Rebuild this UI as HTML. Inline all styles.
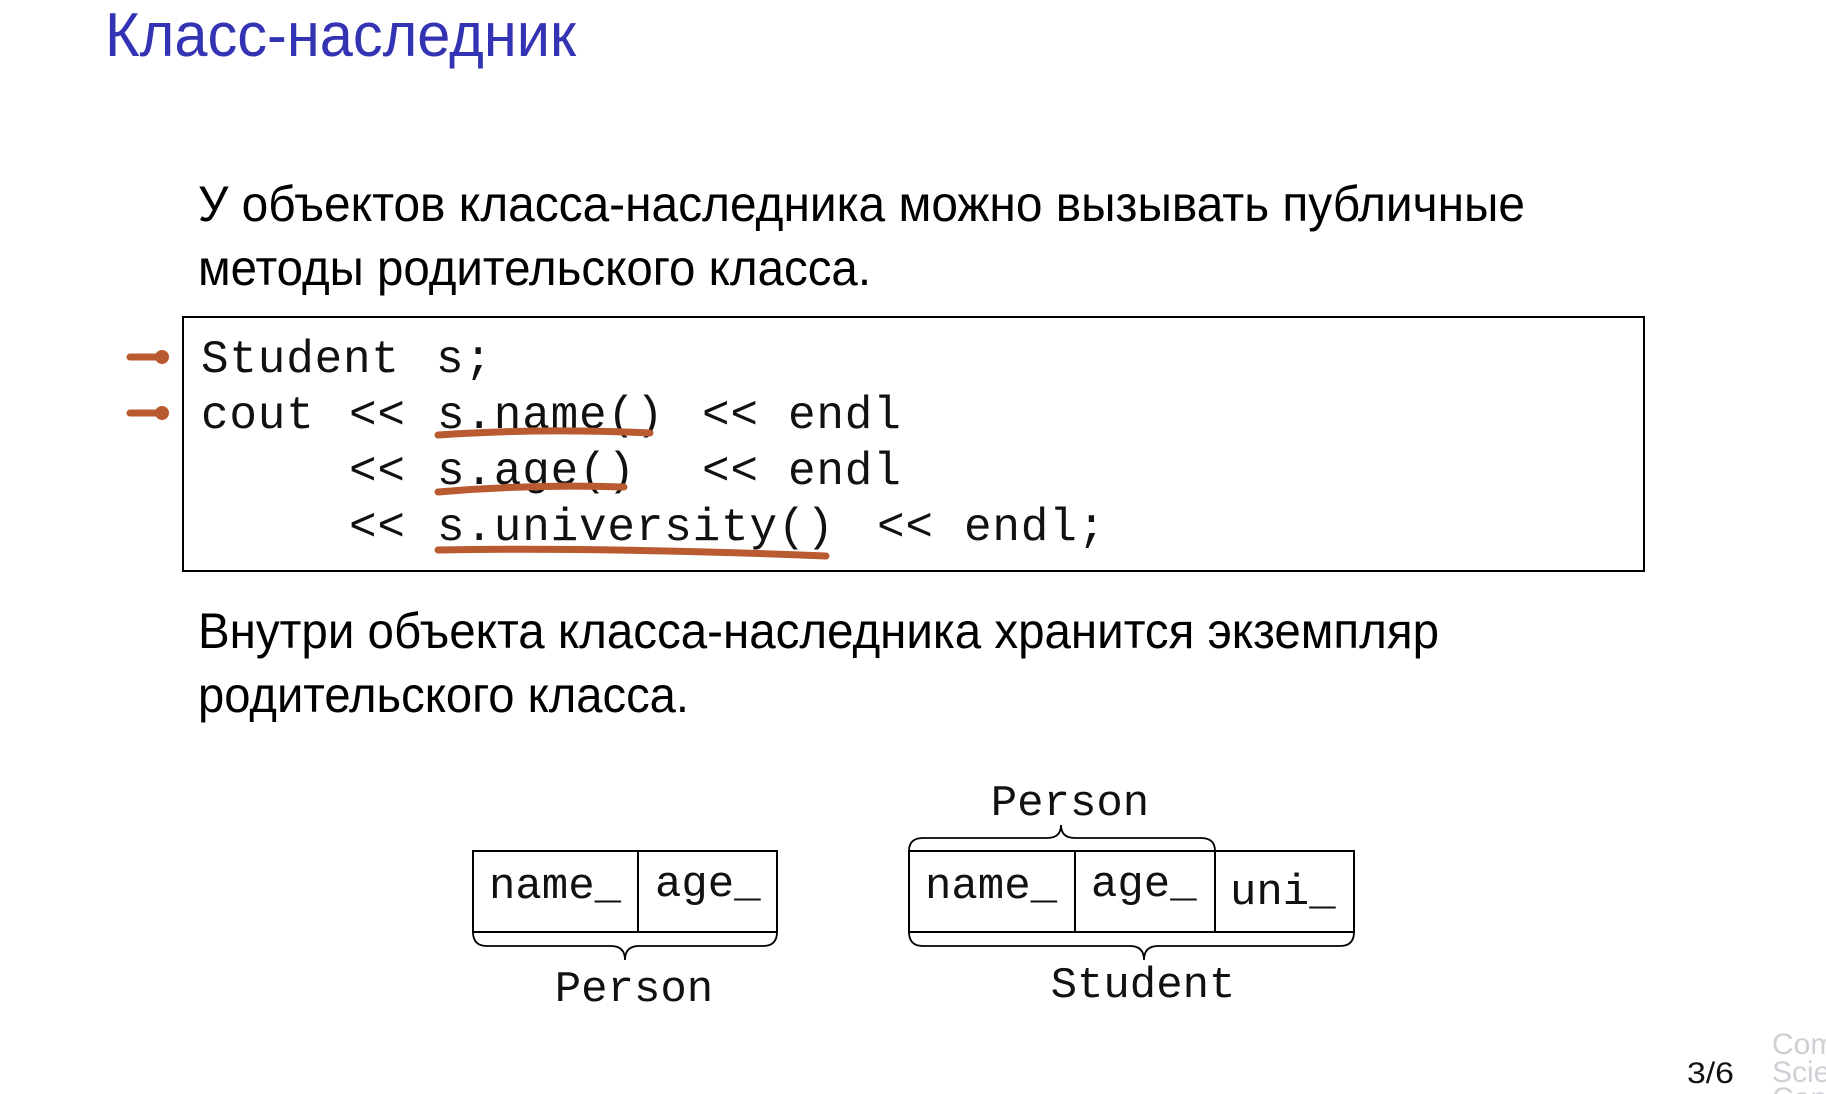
<!DOCTYPE html>
<html><head><meta charset="utf-8"><style>html,body{margin:0;padding:0;background:#fff;width:1826px;height:1094px;overflow:hidden}</style></head>
<body>
<svg width="1826" height="1094" viewBox="0 0 1826 1094" xmlns="http://www.w3.org/2000/svg">
<rect width="1826" height="1094" fill="#fff"/>
<g font-family="'Liberation Sans', sans-serif">
<text x="105" y="56" font-size="62" fill="#3333b3" textLength="471" lengthAdjust="spacingAndGlyphs">Класс-наследник</text>
<text x="198" y="221" font-size="50" fill="#000" textLength="1327" lengthAdjust="spacingAndGlyphs">У объектов класса-наследника можно вызывать публичные</text>
<text x="198" y="285" font-size="50" fill="#000" textLength="673" lengthAdjust="spacingAndGlyphs">методы родительского класса.</text>
<text x="198" y="648" font-size="50" fill="#000" textLength="1241" lengthAdjust="spacingAndGlyphs">Внутри объекта класса-наследника хранится экземпляр</text>
<text x="198" y="712" font-size="50" fill="#000" textLength="491" lengthAdjust="spacingAndGlyphs">родительского класса.</text>
</g>
<rect x="183" y="317" width="1461" height="254" fill="none" stroke="#000" stroke-width="2"/>
<g font-family="'Liberation Mono', monospace" font-size="46" fill="#111" letter-spacing="0.8">
<text x="201" y="372">Student</text><text x="436" y="372">s;</text>
<text x="201" y="428">cout</text><text x="349" y="428">&lt;&lt;</text><text x="437" y="428">s.name()</text><text x="702" y="428">&lt;&lt;</text><text x="788" y="428">endl</text>
<text x="349" y="484">&lt;&lt;</text><text x="437" y="484">s.age()</text><text x="702" y="484">&lt;&lt;</text><text x="788" y="484">endl</text>
<text x="349" y="540">&lt;&lt;</text><text x="437" y="540">s.university()</text><text x="877" y="540">&lt;&lt;</text><text x="964" y="540">endl;</text>
</g>
<g stroke="#b95a30" stroke-width="7" stroke-linecap="round" fill="none">
<path d="M438,435 Q540,428 650,433"/>
<path d="M438,492 Q530,484 624,487"/>
<path d="M438,550 Q600,547 826,556"/>
<path d="M130,357 H160"/>
<path d="M130,413 H160"/>
</g>
<circle cx="162" cy="357" r="7" fill="#b95a30"/>
<circle cx="162" cy="413" r="7" fill="#b95a30"/>
<g fill="none" stroke="#000" stroke-width="2">
<rect x="473" y="851" width="304" height="81"/>
<line x1="638" y1="851" x2="638" y2="932"/>
<rect x="909" y="851" width="445" height="81"/>
<line x1="1075" y1="851" x2="1075" y2="932"/>
<line x1="1215" y1="851" x2="1215" y2="932"/>
<path d="M473,932 q0,14 14,14 H611 q14,0 14,14 q0,-14 14,-14 H763 q14,0 14,-14" stroke-width="1.8"/>
<path d="M909,932 q0,14 14,14 H1130 q14,0 14,14 q0,-14 14,-14 H1340 q14,0 14,-14" stroke-width="1.8"/>
<path d="M909,851 q0,-13 14,-13 H1047 q14,0 14,-13 q0,13 14,13 H1201 q14,0 14,13" stroke-width="1.8"/>
</g>
<g font-family="'Liberation Mono', monospace" font-size="44" fill="#111">
<text x="489" y="898">name_</text>
<text x="655" y="896">age_</text>
<text x="925" y="898">name_</text>
<text x="1091" y="896">age_</text>
<text x="1230" y="904">uni_</text>
<text x="634" y="1001" text-anchor="middle">Person</text>
<text x="1070" y="815" text-anchor="middle">Person</text>
<text x="1143" y="997" text-anchor="middle">Student</text>
</g>
<text x="1687" y="1083" font-family="'Liberation Sans', sans-serif" font-size="30" fill="#111" textLength="47" lengthAdjust="spacingAndGlyphs">3/6</text>
<g font-family="'Liberation Sans', sans-serif" font-size="30" fill="#cdd1d6">
<text x="1772" y="1054">Com</text>
<text x="1772" y="1082">Scie</text>
<text x="1772" y="1108">Cen</text>
</g>
</svg>
</body></html>
